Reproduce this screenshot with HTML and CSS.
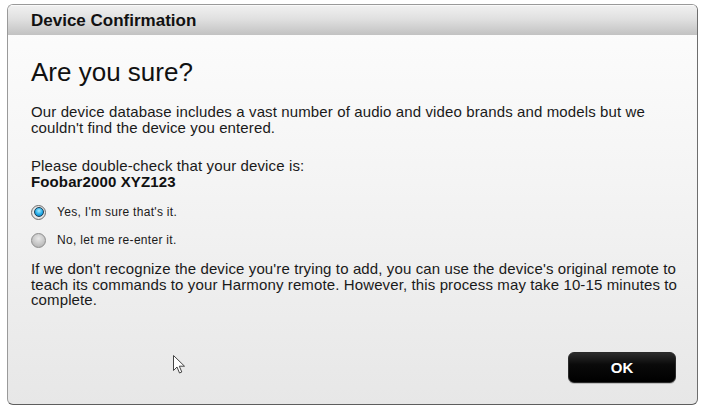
FILE: index.html
```html
<!DOCTYPE html>
<html lang="en">
<head>
<meta charset="utf-8">
<title>Device Confirmation</title>
<link rel="stylesheet" href="styles.css">
</head>
<body>
<div class="dialog">
  <div class="header">Device Confirmation</div>
  <div class="content">
    <h1 class="title">Are you sure?</h1>
    <p class="text">Our device database includes a vast number of audio and video brands and models but we couldn't find the device you entered.</p>
    <p class="text check">Please double-check that your device is:<br><strong>Foobar2000 XYZ123</strong></p>
    <div class="options">
      <label class="option"><span class="radio selected"></span><span>Yes, I'm sure that's it.</span></label>
      <label class="option"><span class="radio"></span><span>No, let me re-enter it.</span></label>
    </div>
    <p class="text info">If we don't recognize the device you're trying to add, you can use the device's original remote to teach its commands to your Harmony remote. However, this process may take 10-15 minutes to complete.</p>
    <div class="footer">
      <button class="ok">OK</button>
    </div>
  </div>
  <svg class="cursor" width="13" height="20" viewBox="0 0 13 20"><path d="M0.5 0.5 L0.5 15.5 L4 12 L6.5 18 L8.8 17 L6.3 11.2 L11.5 11.2 Z" fill="#fff" stroke="#444" stroke-width="1" stroke-linejoin="round"/></svg>
</div>
</body>
</html>
```
FILE: styles.css
```css
html, body {
  margin: 0;
  padding: 0;
  background: #ffffff;
}
body {
  padding: 4px 7px 0 7px;
  font-family: "Liberation Sans", Arial, sans-serif;
  color: #1a1a1a;
}
.dialog {
  position: relative;
  width: 691px;
  height: 401px;
  box-sizing: border-box;
  border: 1px solid #9a9a9a;
  border-right-color: #6e6e6e;
  border-bottom-color: #5e5e5e;
  border-radius: 6px;
  overflow: hidden;
  display: flex;
  flex-direction: column;
  background: linear-gradient(#fdfdfd 0%, #f5f5f5 40%, #e7e7e7 100%);
}
.header {
  height: 30px;
  flex: none;
  box-sizing: border-box;
  padding-left: 23px;
  display: flex;
  align-items: center;
  font-weight: bold;
  font-size: 17px;
  color: #111;
  background: linear-gradient(#f0f0f0 0%, #e0e0e0 45%, #c2c2c2 100%);
  border-top: 1px solid #fafafa;
}
.content {
  flex: 1;
  display: flex;
  flex-direction: column;
  padding: 0 18px 0 23px;
}
.title {
  margin: 22px 0 0 0;
  font-size: 26px;
  line-height: 30px;
  font-weight: normal;
  color: #111;
}
.text {
  margin: 0;
  font-size: 15px;
  line-height: 15.5px;
  letter-spacing: 0.12px;
}
.title + .text {
  margin-top: 17px;
}
.check {
  margin-top: 23px;
}
.check strong {
  color: #111;
}
.options {
  margin-top: 15px;
  display: flex;
  flex-direction: column;
  gap: 12px;
}
.option {
  display: flex;
  align-items: center;
  gap: 11px;
  height: 16px;
  font-size: 12px;
  letter-spacing: 0.3px;
}
.radio {
  width: 13px;
  height: 13px;
  border-radius: 50%;
  border: 1px solid #8c8c8c;
  background: radial-gradient(circle at 50% 35%, #e8e8e8 0%, #bdbdbd 70%, #a8a8a8 100%);
  position: relative;
  flex: none;
}
.radio.selected {
  background: radial-gradient(circle at 50% 50%, #ffffff 0%, #d6d6d6 100%);
  border-color: #6d6d6d;
}
.radio.selected::after {
  content: "";
  position: absolute;
  left: 1.5px;
  top: 1.5px;
  width: 8px;
  height: 8px;
  border-radius: 50%;
  border: 1px solid #1c3f55;
  background: radial-gradient(circle at 50% 35%, #a8ecff 0%, #22abe8 55%, #0a6fb0 100%);
}
.info {
  margin-top: 13px;
}
.footer {
  margin-top: auto;
  display: flex;
  justify-content: flex-end;
  padding: 0 3px 21px 0;
}
.ok {
  width: 108px;
  height: 31px;
  border: 1px solid #2a2a2a;
  border-radius: 6px;
  background: linear-gradient(#2c2c2c 0%, #0a0a0a 40%, #000 100%);
  color: #fff;
  font-family: "Liberation Sans", Arial, sans-serif;
  font-weight: bold;
  font-size: 15px;
  box-shadow: 0 1px 0 #bdbdbd;
}
.cursor {
  position: absolute;
  left: 165px;
  top: 350px;
}
```
